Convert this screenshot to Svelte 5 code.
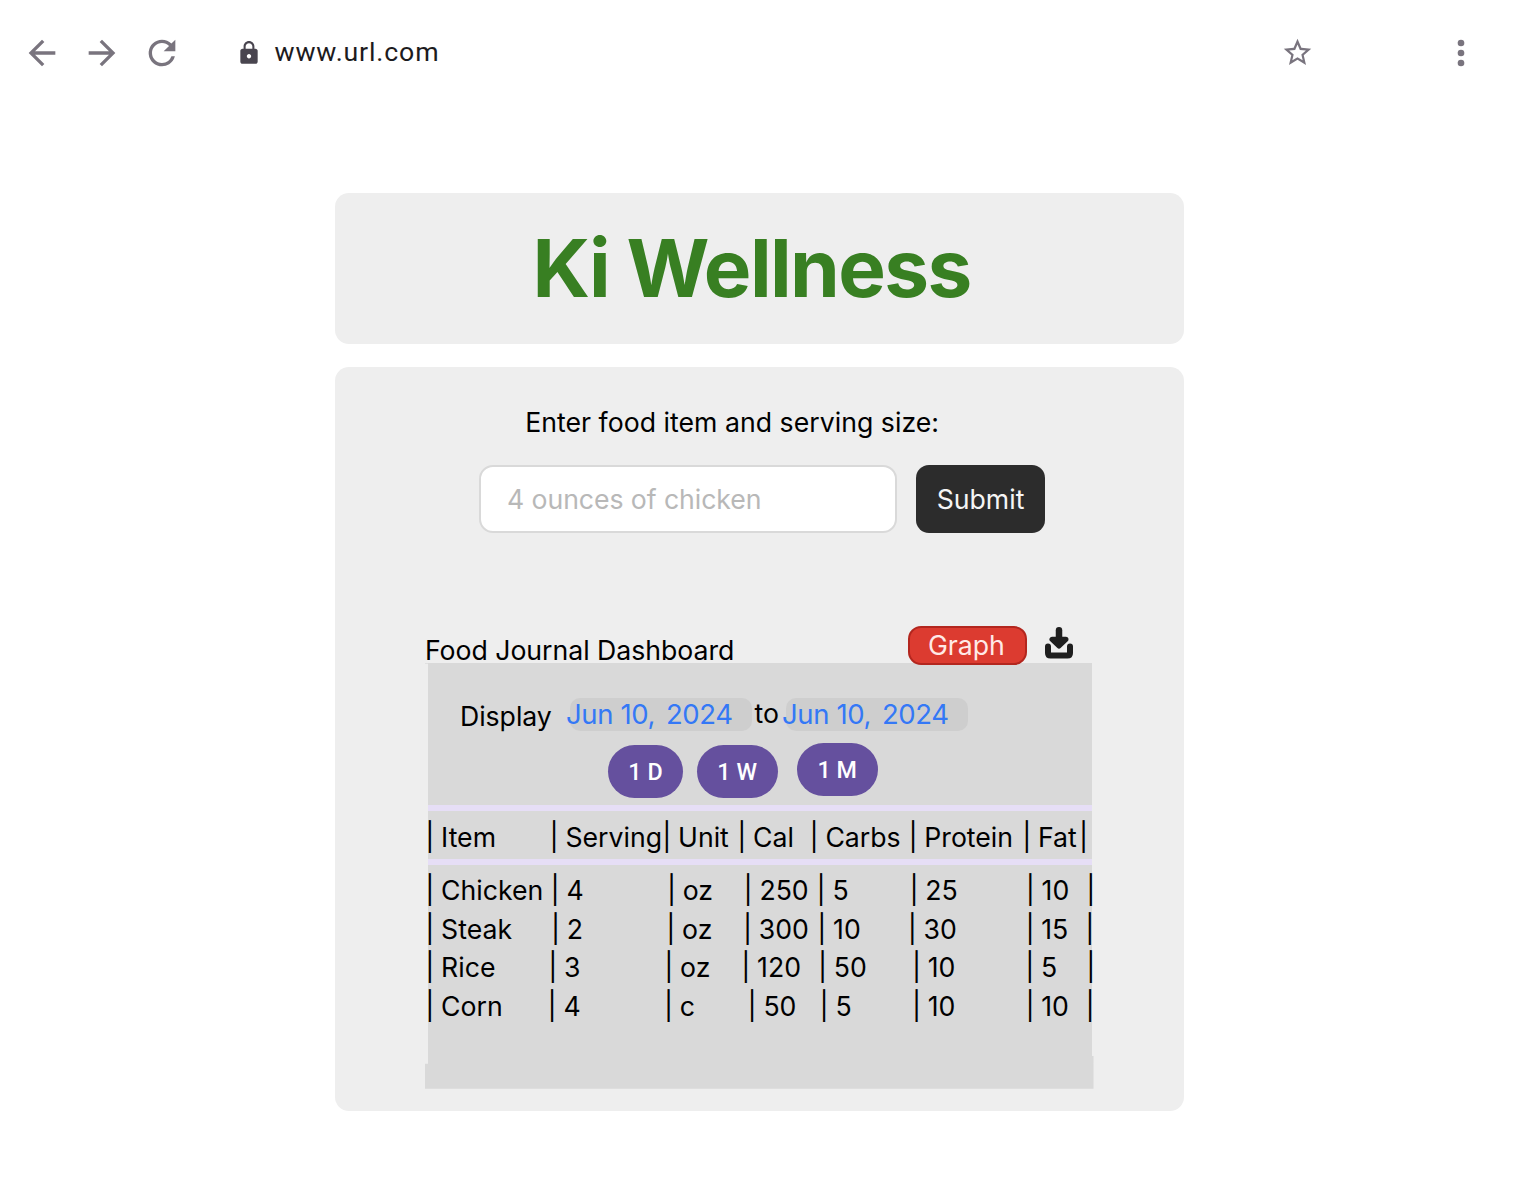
<script>
  const header = {
    labels: ['Item', 'Serving', 'Unit', 'Cal', 'Carbs', 'Protein', 'Fat', ''],
    widths: [124.3, 112.7, 75, 72.3, 98.9, 113.7, 56.8, 9]
  };
  const rows = [
    { labels: ['Chicken', '4', 'oz', '250', '5', '25', '10', ''], widths: [125.3, 116.4, 76.6, 73, 92.9, 116.3, 60.5, 9] },
    { labels: ['Steak', '2', 'oz', '300', '10', '30', '15', ''], widths: [125.7, 115.3, 76.7, 74.3, 90.5, 117.7, 59.8, 9] },
    { labels: ['Rice', '3', 'oz', '120', '50', '10', '5', ''], widths: [123, 116, 77, 76.7, 94, 113.2, 61.2, 9] },
    { labels: ['Corn', '4', 'c', '50', '5', '10', '10', ''], widths: [122.3, 116.4, 83.6, 72, 92.4, 113.5, 60.1, 9] }
  ];
</script>

{#snippet line(row)}
  <div class="row">
    {#each row.labels as label, i}
      <span class="cell" style:width="{row.widths[i]}px"><span class="bar">|</span>{label}</span>
    {/each}
  </div>
{/snippet}

<div class="page">
  <header class="browser">
    <svg class="nav" viewBox="0 0 24 24"><path d="M20 11H7.83l5.59-5.59L12 4l-8 8 8 8 1.41-1.41L7.83 13H20v-2z" /></svg>
    <svg class="nav" viewBox="0 0 24 24"><path d="M12 4l-1.41 1.41L16.17 11H4v2h12.17l-5.58 5.59L12 20l8-8z" /></svg>
    <svg class="nav" viewBox="0 0 24 24"><path d="M17.65 6.35A7.958 7.958 0 0 0 12 4a8 8 0 1 0 7.73 10h-2.08A5.99 5.99 0 0 1 12 18c-3.31 0-6-2.69-6-6s2.69-6 6-6c1.66 0 3.14.69 4.22 1.78L13 11h7V4l-2.35 2.35z" /></svg>
    <svg class="lock" viewBox="0 0 24 24"><path d="M18 8h-1V6c0-2.76-2.24-5-5-5S7 3.24 7 6v2H6c-1.1 0-2 .9-2 2v10c0 1.1.9 2 2 2h12c1.1 0 2-.9 2-2V10c0-1.1-.9-2-2-2zm-6 9c-1.1 0-2-.9-2-2s.9-2 2-2 2 .9 2 2-.9 2-2 2zm3.1-9H8.9V6c0-1.71 1.39-3.1 3.1-3.1s3.1 1.39 3.1 3.1v2z" /></svg>
    <span class="url">www.url.com</span>
    <svg class="star" viewBox="0 0 24 24"><path d="M22 9.24l-7.19-.62L12 2 9.19 8.63 2 9.24l5.46 4.73L5.82 21 12 17.27 18.18 21l-1.63-7.03L22 9.24zM12 15.4l-3.76 2.27 1-4.28-3.32-2.88 4.38-.38L12 6.1l1.71 4.04 4.38.38-3.32 2.88 1 4.28L12 15.4z" /></svg>
    <svg class="nav dots" viewBox="0 0 24 24"><circle cx="12" cy="6" r="2" /><circle cx="12" cy="12" r="2" /><circle cx="12" cy="18" r="2" /></svg>
  </header>

  <main>
    <section class="card brand"><h1>Ki Wellness</h1></section>

    <section class="card content">
      <label class="prompt" for="food">Enter food item and serving size:</label>
      <div class="entry">
        <input id="food" placeholder="4 ounces of chicken" />
        <button class="submit">Submit</button>
      </div>

      <div class="heading">
        <h2>Food Journal Dashboard</h2>
        <button class="graph">Graph</button>
        <svg class="download" viewBox="0 0 28 32">
          <path class="tray" d="M3 19.5V26q0 2.5 2.5 2.5h17q2.5 0 2.5-2.5V19.5" />
          <path class="stem" d="M14 3.3V16" />
          <path class="head" d="M7.2 12.4h13.6L14 18.8z" />
        </svg>
      </div>

      <div class="panel">
        <div class="range">
          <span class="display">Display</span>
          <span class="date">Jun 10, <span class="year">2024</span></span>
          <span class="to">to</span>
          <span class="date">Jun 10, <span class="year">2024</span></span>
        </div>
        <div class="periods">
          <button>1 D</button>
          <button class="wide">1 W</button>
          <button class="wide month">1 M</button>
        </div>
        <div class="head-row">{@render line(header)}</div>
        <div class="rows">
          {#each rows as row}{@render line(row)}{/each}
        </div>
      </div>
      <div class="foot"></div>
    </section>
  </main>
</div>

<style>
  :global(body) { background: #fff; }
  * { box-sizing: border-box; }
  .page {
    width: 1534px;
    height: 1184px;
    overflow: hidden;
    font-family: Inter, 'Liberation Sans', sans-serif;
    font-size: 26.67px;
    color: #000;
  }
  button, input { font: inherit; border: 0; margin: 0; padding: 0; }
  h1, h2 { margin: 0; font-weight: 400; font-size: inherit; }
  svg { display: block; flex: none; }

  .browser { display: flex; align-items: center; height: 106px; padding-left: 22px; }
  .nav { width: 40px; height: 40px; margin-right: 20px; fill: #79747e; }
  .lock { width: 26px; height: 26px; margin-left: 33.5px; margin-top: -1px; fill: #49454f; }
  .url {
    flex: none;
    width: 1009.7px;
    margin: -2px 0 0 13px;
    font-family: Roboto, sans-serif;
    font-size: 26.7px;
    letter-spacing: 0.86px;
    color: #1d1b20;
  }
  .star { width: 33px; height: 33px; fill: #79747e; margin: -1px 127px 0 -3.5px; }
  .dots { margin: 0; }

  main { width: 849px; margin: 87px 0 0 334.5px; }
  .card { background: #eee; border-radius: 14px; }
  .brand { height: 150.5px; padding: 26px 0 0 198px; margin-bottom: 23.5px; }
  h1 {
    font-size: 80px;
    line-height: 97px;
    font-weight: 700;
    letter-spacing: -1.6px;
    color: #387f22;
    white-space: nowrap;
  }
  .content { height: 743.5px; padding-top: 36px; }
  .prompt { display: block; height: 38px; line-height: 38.8px; margin-left: 190.7px; white-space: nowrap; letter-spacing: 0.02px; }
  .entry { display: flex; gap: 19.5px; margin: 24px 0 0 144.5px; }
  input {
    width: 417.5px;
    height: 68px;
    padding: 0 26px;
    border: 2px solid #d9d9d9;
    border-radius: 14px;
    background: #fff;
  }
  input::placeholder { color: #b8b8b8; opacity: 1; letter-spacing: -0.08px; }
  .submit { width: 129px; height: 68px; border-radius: 13px; background: #2c2c2c; color: #f5f5f5; }

  .heading { display: flex; height: 38px; margin: 93px 0 0 90.4px; }
  h2 { width: 483px; line-height: 38px; margin-top: 5px; white-space: nowrap; letter-spacing: -0.03px; }
  .graph {
    position: relative;
    width: 119px;
    height: 38.5px;
    padding-right: 2px;
    border: 2px solid #b3261e;
    border-radius: 13px;
    background: #dc3b30;
    color: #ffe9e7;
    z-index: 1;
  }
  .download { width: 28px; height: 32px; margin: 1px 0 0 18px; fill: #1e1e1e; stroke: #1e1e1e; }
  .tray { fill: none; stroke-width: 6; stroke-linecap: round; }
  .stem { stroke-width: 6.5; stroke-linecap: round; }
  .head { stroke-width: 5.4; stroke-linejoin: round; }

  .panel { position: relative; width: 664px; height: 393px; margin: -1.2px 0 0 93.5px; background: #d9d9d9; }
  .panel::before { content: ''; position: absolute; left: -3px; top: 0; width: 3px; height: 1px; background: #e0e0e0; }
  .range { display: flex; height: 69px; padding: 35px 0 0 32px; white-space: nowrap; }
  .display { width: 110px; line-height: 37px; letter-spacing: -0.05px; }
  .date {
    width: 182px;
    height: 33px;
    border-radius: 10px;
    background: #cecece;
    color: #3478f6;
    font-size: 27.5px;
    letter-spacing: -0.38px;
    line-height: 33px;
    text-indent: -4px;
  }
  .year { margin-left: 3.5px; }
  .to { width: 34px; padding-left: 2.5px; line-height: 31px; }
  .periods { display: flex; gap: 14px; height: 73px; padding: 13px 0 0 180px; }
  .periods button {
    width: 75px;
    height: 53.5px;
    padding-top: 1px;
    border-radius: 27px;
    background: #65509e;
    color: #fff;
    font: 500 23.3px Roboto, sans-serif;
    letter-spacing: 0.1px;
  }
  .periods .wide { width: 80.5px; }
  .periods .month { margin: -2px 0 0 5.5px; }
  .head-row {
    height: 60px;
    padding-top: 7px;
    border: solid #e6def6;
    border-width: 6.5px 0;
  }
  .rows { padding-top: 6.4px; }
  .row { display: flex; width: 677px; height: 38.45px; line-height: 38.45px; margin-left: -3.6px; }
  .cell { flex: none; white-space: nowrap; }
  .bar { display: inline-block; width: 16.7px; padding-left: 0.9px; font-size: 27.5px; }
  .foot {
    width: 668.5px;
    height: 33px;
    margin-left: 90.5px;
    background: #d9d9d9;
    clip-path: polygon(0 8px, 3px 8px, 3px -1px, 100% -1px, 100% 100%, 0 100%);
  }
</style>
